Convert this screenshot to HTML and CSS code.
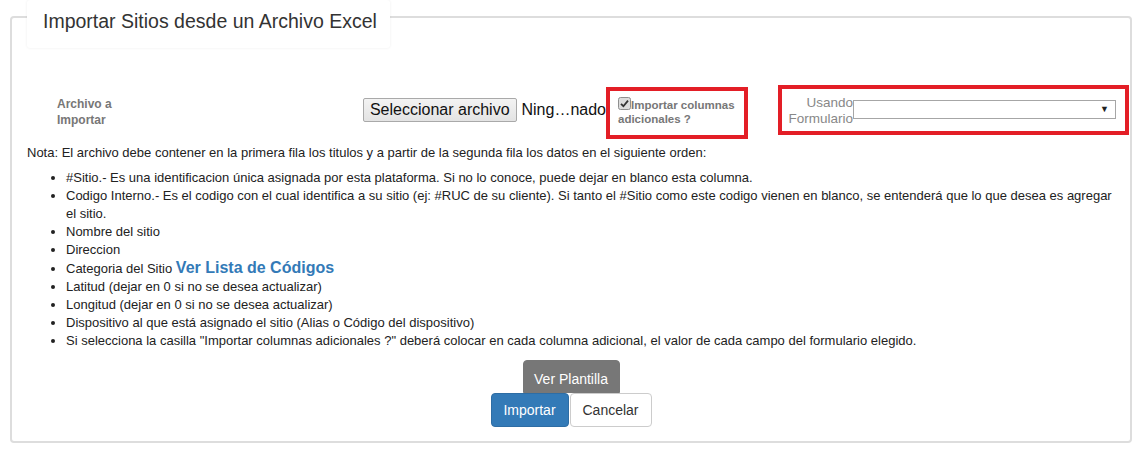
FILE: index.html
```html
<!DOCTYPE html>
<html lang="es">
<head>
<meta charset="utf-8">
<title>Importar Sitios</title>
<link rel="stylesheet" href="styles.css">
</head>
<body>
<div class="page">
  <div class="panel">
    <div class="legend">Importar Sitios desde un Archivo Excel</div>
    <div class="form-row">
      <div class="field-label">Archivo a<br>Importar</div>
      <div class="file-group">
        <span class="file-btn">Seleccionar archivo</span>
        <span class="file-name">Ning…nado</span>
      </div>
      <div class="hl-box hl-check">
        <label class="check-label"><span class="checkbox"><svg viewBox="0 0 13 13" width="13" height="13"><rect x="0.5" y="0.5" width="12" height="12" rx="2" fill="#dcdcdc" stroke="#8f8f8f"/><path d="M3 6.8 L5.4 9.2 L10 3.6" fill="none" stroke="#333" stroke-width="1.8"/></svg></span>Importar columnas adicionales ?</label>
      </div>
      <div class="hl-box hl-select">
        <span class="select-label">Usando<br>Formulario</span>
        <span class="select"><span class="caret">▼</span></span>
      </div>
    </div>
    <p class="note">Nota: El archivo debe contener en la primera fila los titulos y a partir de la segunda fila los datos en el siguiente orden:</p>
    <ul class="cols">
      <li>#Sitio.- Es una identificacion única asignada por esta plataforma. Si no lo conoce, puede dejar en blanco esta columna.</li>
      <li>Codigo Interno.- Es el codigo con el cual identifica a su sitio (ej: #RUC de su cliente). Si tanto el #Sitio como este codigo vienen en blanco, se entenderá que lo que desea es agregar el sitio.</li>
      <li>Nombre del sitio</li>
      <li>Direccion</li>
      <li>Categoria del Sitio <a class="link" href="#">Ver Lista de Códigos</a></li>
      <li>Latitud (dejar en 0 si no se desea actualizar)</li>
      <li>Longitud (dejar en 0 si no se desea actualizar)</li>
      <li>Dispositivo al que está asignado el sitio (Alias o Código del dispositivo)</li>
      <li>Si selecciona la casilla "Importar columnas adicionales ?" deberá colocar en cada columna adicional, el valor de cada campo del formulario elegido.</li>
    </ul>
    <div class="actions">
      <button class="btn btn-gray" type="button">Ver Plantilla</button>
      <div class="btn-pair">
        <button class="btn btn-primary" type="button">Importar</button>
        <button class="btn btn-default" type="button">Cancelar</button>
      </div>
    </div>
  </div>
</div>
</body>
</html>
```
FILE: styles.css
```css
* { box-sizing: border-box; }
html, body { margin: 0; padding: 0; background: #fff; }
body {
  font-family: "Liberation Sans", Arial, sans-serif;
  font-size: 13px;
  color: #333;
}
.page { padding: 0 16px 0 10px; }
.panel {
  margin-top: 16px;
  border: 2px solid #dddddd;
  border-radius: 4px;
  padding: 0 15px 14px 15px;
}
.legend {
  margin: -18px 0 0 0;
  width: 363px;
  height: 48px;
  background: #fff;
  box-shadow: 0 0 3px rgba(0,0,0,0.07);
  border-radius: 3px;
  padding: 10px 0 0 16px;
  font-size: 19.5px;
  line-height: 22px;
  color: #333;
}
.form-row {
  display: flex;
  align-items: flex-start;
  margin-top: 37px;
}
.form-row > * { flex-shrink: 0; }
.field-label {
  margin: 11px 0 0 30px;
  width: 306px;
  font-weight: bold;
  color: #777;
  font-size: 12px;
  line-height: 16px;
}
.file-group {
  width: 243px;
  margin-top: 13px;
  display: flex;
  align-items: center;
  white-space: nowrap;
  color: #111;
  font-size: 16px;
}
.file-btn {
  display: inline-block;
  width: 155px;
  height: 24px;
  line-height: 22px;
  text-align: center;
  border: 1px solid #a9a9a9;
  border-radius: 2px;
  background: linear-gradient(#f3f3f3, #e3e3e3);
  color: #111;
}
.file-name { margin-left: 5px; }
.hl-box {
  border: 4px solid #e31e26;
}
.hl-check {
  width: 142px;
  height: 52px;
  margin-top: 2px;
  padding: 6px 6px 0 8px;
}
.check-label {
  display: block;
  font-size: 11.5px;
  font-weight: bold;
  color: #777;
  line-height: 14px;
}
.checkbox {
  display: inline-block;
  width: 13px;
  height: 13px;
  vertical-align: -1px;
}
.checkbox svg { display: block; }
.hl-select {
  margin-left: 30px;
  width: 351px;
  height: 50px;
  display: flex;
  align-items: center;
  padding: 0 9px 0 3px;
}
.select-label {
  text-align: right;
  font-size: 13.5px;
  line-height: 16px;
  color: #888;
  width: 68px;
  margin-top: 1px;
}
.select {
  flex: 1;
  height: 19px;
  border: 1px solid #a6a6a6;
  background: #fff;
  display: flex;
  align-items: center;
  justify-content: flex-end;
  padding-right: 6px;
  margin-top: -2px;
}
.caret { font-size: 9px; color: #222; }
.note {
  margin: 5px 0 0 0;
  line-height: 17px;
  color: #222;
}
.cols {
  margin: 8px 0 0 0;
  padding: 0 0 0 39px;
  line-height: 18px;
  color: #222;
}
.link {
  color: #337ab7;
  font-weight: bold;
  font-size: 16px;
  text-decoration: none;
}
.actions {
  margin-top: 10px;
  display: flex;
  flex-direction: column;
  align-items: center;
}
.btn-pair { display: flex; }
.btn {
  font-family: "Liberation Sans", Arial, sans-serif;
  font-size: 14px;
  line-height: 20px;
  padding: 6px 12px;
  border: 1px solid transparent;
  border-radius: 4px;
  cursor: pointer;
}
.btn-gray {
  background: #777;
  color: #fff;
  border-color: #777;
  width: 97px;
  height: 33px;
  padding: 5px 0 0 0;
  border-radius: 4px 4px 0 0;
}
.btn-primary {
  background: #337ab7;
  border-color: #2e6da4;
  color: #fff;
  width: 78px;
  height: 34px;
  padding: 6px 0;
}
.btn-default {
  background: #fff;
  border-color: #ccc;
  color: #333;
  width: 82px;
  height: 34px;
  margin-left: 1px;
  padding: 6px 0;
}
```
